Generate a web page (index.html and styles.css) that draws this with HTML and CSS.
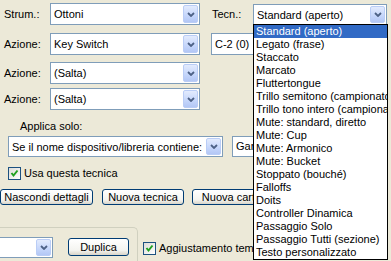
FILE: index.html
```html
<!DOCTYPE html>
<html lang="it">
<head>
  <meta charset="UTF-8">
  <title>Tecniche</title>
  <link rel="stylesheet" href="styles.css">
</head>
<body>
  <div class="pannello">
    <div class="riga r1">
      <span class="etichetta">Strum.:</span>
      <div class="combo stretto"><span class="valore">Ottoni</span><span class="freccia"><svg width="8" height="5" viewBox="0 0 8 5"><path d="M1 1 L4 4 L7 1" /></svg></span></div>
      <span class="etichetta tecn">Tecn.:</span>
      <div class="combo tecnica"><span class="valore">Standard (aperto)</span><span class="freccia"><svg width="8" height="5" viewBox="0 0 8 5"><path d="M1 1 L4 4 L7 1" /></svg></span></div>
    </div>

    <div class="riga r2">
      <span class="etichetta">Azione:</span>
      <div class="combo stretto"><span class="valore">Key Switch</span><span class="freccia"><svg width="8" height="5" viewBox="0 0 8 5"><path d="M1 1 L4 4 L7 1" /></svg></span></div>
      <div class="campo nota">C-2 (0)</div>
    </div>

    <div class="riga r3">
      <span class="etichetta">Azione:</span>
      <div class="combo stretto"><span class="valore">(Salta)</span><span class="freccia"><svg width="8" height="5" viewBox="0 0 8 5"><path d="M1 1 L4 4 L7 1" /></svg></span></div>
    </div>

    <div class="riga r4">
      <span class="etichetta">Azione:</span>
      <div class="combo stretto"><span class="valore">(Salta)</span><span class="freccia"><svg width="8" height="5" viewBox="0 0 8 5"><path d="M1 1 L4 4 L7 1" /></svg></span></div>
    </div>

    <div class="applica">Applica solo:</div>

    <div class="riga r5">
      <div class="combo largo"><span class="valore">Se il nome dispositivo/libreria contiene:</span><span class="freccia"><svg width="8" height="5" viewBox="0 0 8 5"><path d="M1 1 L4 4 L7 1" /></svg></span></div>
      <div class="campo libreria">Garritan</div>
    </div>

    <label class="spunta usa">
      <span class="casella"><svg width="9" height="9" viewBox="0 0 9 9"><path d="M1.5 4 L3.5 6.5 L7.5 1.5" /></svg></span>
      Usa questa tecnica
    </label>

    <div class="pulsanti">
      <button class="nascondi">Nascondi dettagli</button>
      <button class="nuova">Nuova tecnica</button>
      <button class="cartella">Nuova cartella</button>
    </div>

    <div class="fondo">
      <div class="gruppo">
        <div class="combo corto"><span class="valore"></span><span class="freccia"><svg width="8" height="5" viewBox="0 0 8 5"><path d="M1 1 L4 4 L7 1" /></svg></span></div>
        <button class="duplica">Duplica</button>
      </div>
      <label class="spunta aggiusta">
        <span class="casella"><svg width="9" height="9" viewBox="0 0 9 9"><path d="M1.5 4 L3.5 6.5 L7.5 1.5" /></svg></span>
        Aggiustamento tempo
      </label>
    </div>
  </div>

  <ul class="elenco">
    <li class="scelto">Standard (aperto)</li>
    <li>Legato (frase)</li>
    <li>Staccato</li>
    <li>Marcato</li>
    <li>Fluttertongue</li>
    <li>Trillo semitono (campionato)</li>
    <li>Trillo tono intero (campionato)</li>
    <li>Mute: standard, diretto</li>
    <li>Mute: Cup</li>
    <li>Mute: Armonico</li>
    <li>Mute: Bucket</li>
    <li>Stoppato (bouché)</li>
    <li>Falloffs</li>
    <li>Doits</li>
    <li>Controller Dinamica</li>
    <li>Passaggio Solo</li>
    <li>Passaggio Tutti (sezione)</li>
    <li>Testo personalizzato</li>
  </ul>
</body>
</html>
```

FILE: styles.css
```css
html, body {
  margin: 0;
  width: 391px;
  height: 261px;
  overflow: hidden;
  background: #ece9d8;
  font-family: "Liberation Sans", Arial, sans-serif;
  font-size: 11px;
  color: #000;
}
.pannello {
  padding-top: 3px;
}
.riga {
  display: flex;
  align-items: center;
  white-space: nowrap;
}
.r2 { margin-top: 8px; }
.r3 { margin-top: 7px; }
.r4 { margin-top: 4px; }
.r5 { margin-top: 3px; padding-left: 8px; }
.etichetta {
  width: 46px;
  padding-left: 4px;
}
.etichetta.tecn {
  width: 41px;
  padding-left: 12px;
}
.combo {
  display: flex;
  box-sizing: border-box;
  height: 22px;
  padding: 1px;
  border: 1px solid #7f9db9;
  background: #fff;
  flex-shrink: 0;
}
.combo .valore {
  flex: 1;
  padding-left: 2px;
  line-height: 18px;
  overflow: hidden;
  white-space: nowrap;
}
.combo .freccia {
  box-sizing: border-box;
  width: 15px;
  display: flex;
  align-items: center;
  justify-content: center;
  border: 1px solid #bacdf6;
  border-radius: 2px;
  background: linear-gradient(#e3ebfd, #c5d6fb 60%, #b3c7f5);
}
.freccia path {
  fill: none;
  stroke: #4d6185;
  stroke-width: 1.8;
}
.stretto { width: 150px; }
.tecnica { width: 134px; height: 21px; }
.largo { width: 215px; height: 21px; }
.corto { width: 61px; height: 21px; margin-left: -8px; }
.campo {
  box-sizing: border-box;
  height: 22px;
  padding-left: 3px;
  line-height: 20px;
  border: 1px solid #7f9db9;
  background: #fff;
  width: 80px;
  flex-shrink: 0;
}
.nota { margin-left: 11px; }
.libreria { margin-left: 9px; height: 21px; line-height: 19px; }
.applica {
  margin-top: 10px;
  padding-left: 20px;
  line-height: 13px;
}
.spunta {
  display: flex;
  align-items: center;
  gap: 3px;
  line-height: 13px;
  white-space: nowrap;
}
.usa {
  margin-top: 10px;
  padding-left: 8px;
}
.casella {
  box-sizing: border-box;
  width: 13px;
  height: 13px;
  border: 1px solid #1c5180;
  background: linear-gradient(135deg, #dcdcd7, #fff);
  display: flex;
  align-items: center;
  justify-content: center;
}
.casella path {
  fill: none;
  stroke: #21a121;
  stroke-width: 2;
}
.pulsanti {
  display: flex;
  margin-top: 9px;
}
button {
  box-sizing: border-box;
  height: 16px;
  padding: 0;
  border: 1px solid #003c74;
  border-radius: 3px;
  background: linear-gradient(#fff, #f4f4f0 70%, #d8d4c8);
  font-family: "Liberation Sans", Arial, sans-serif;
  font-size: 11px;
  line-height: 14px;
  color: #000;
  white-space: nowrap;
}
.nascondi { width: 93px; }
.nuova { width: 82px; margin-left: 9px; }
.cartella { width: 90px; margin-left: 8px; }
.fondo {
  display: flex;
  align-items: flex-start;
  margin-top: 22px;
}
.gruppo {
  box-sizing: border-box;
  width: 138px;
  height: 40px;
  display: flex;
  align-items: flex-start;
  padding-top: 9px;
  border-top: 1px solid #d0d0bf;
  border-right: 1px solid #d0d0bf;
  border-top-right-radius: 5px;
}
.duplica {
  width: 61px;
  height: 18px;
  margin-top: 1px;
  margin-left: 15px;
}
.aggiusta {
  margin-top: 15px;
  margin-left: 5px;
}
.elenco {
  position: absolute;
  left: 253px;
  top: 24px;
  width: 135px;
  box-sizing: border-box;
  margin: 0;
  padding: 0;
  list-style: none;
  border: 1px solid #000;
  background: #fff;
}
.elenco li {
  height: 13px;
  line-height: 13px;
  padding-left: 2px;
  white-space: nowrap;
  overflow: hidden;
}
.elenco .scelto {
  background: #316ac5;
  color: #fff;
}
```
